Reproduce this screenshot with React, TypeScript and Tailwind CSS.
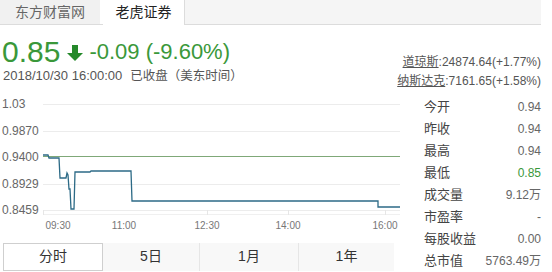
const stats = [
  { label: "今开", value: "0.94" },
  { label: "昨收", value: "0.94" },
  { label: "最高", value: "0.94" },
  { label: "最低", value: "0.85", down: true },
  { label: "成交量", value: "9.12万" },
  { label: "市盈率", value: "-" },
  { label: "每股收益", value: "0.00" },
  { label: "总市值", value: "5763.49万" },
];

const yLabels = ["1.03", "0.9870", "0.9400", "0.8929", "0.8459"];

function DownArrow() {
  return (
    <svg width="16" height="16" viewBox="0 0 16 16" className="shrink-0">
      <polygon points="5,0 11,0 11,8 16,8 8,16 0,8 5,8" fill="#25892a" />
    </svg>
  );
}

function Chart() {
  return (
    <svg width="357" height="128" viewBox="0 0 357 128" className="block">
      {[13, 40, 93, 119].map((y) => (
        <line key={y} x1="0" x2="357" y1={y + 0.5} y2={y + 0.5} stroke="#ececec" />
      ))}
      <line x1="0" x2="357" y1="123.5" y2="123.5" stroke="#f0f0f0" />
      {[0, 164, 245, 342].map((x) => (
        <line key={x} x1={x + 0.5} x2={x + 0.5} y1="119" y2="124" stroke="#e6e6e6" />
      ))}
      <line x1="0" x2="357" y1="65.5" y2="65.5" stroke="#7fa878" />
      <path
        d="M0,64 L5,64 L6,67 L16,67 L17,87 L23,87 L24,82 L25,84 L26,98 L27,98 L28,118 L31,118 L32,81 L47,81 L48,80 L88,80 L89,110 L335,110 L335,116 L357,116"
        fill="none"
        stroke="#2c6a86"
        strokeWidth="1.3"
      />
    </svg>
  );
}

export default function App() {
  return (
    <div className="w-[552px] h-[272px] overflow-hidden bg-white font-['Liberation_Sans','Noto_Sans_CJK_SC',sans-serif] text-[#555]">
      {/* tabs */}
      <div className="flex h-[25px] w-[541px]">
        <div className="flex w-[100px] items-center justify-center border-b border-[#dcdcdc] bg-[#f1f1f1] text-[14px] text-[#666]">
          东方财富网
        </div>
        <div className="w-[3px] border-b border-[#dcdcdc] bg-white" />
        <div className="flex w-[82px] items-center justify-center border-r border-[#dcdcdc] bg-white text-[14px] text-[#222]">
          老虎证券
        </div>
        <div className="flex-1 border-b border-[#dcdcdc] bg-[#f5f5f5]" />
      </div>

      {/* header */}
      <div className="flex h-[66px] justify-between">
        <div className="pl-[2px] pt-[12px]">
          <div className="flex h-[30px] items-center text-[#3a983a]">
            <span className="text-[30px] leading-[30px]">0.85</span>
            <span className="ml-[7px] mr-[6px] mt-[1px]">
              <DownArrow />
            </span>
            <span className="text-[22px] leading-[30px]">-0.09 (-9.60%)</span>
          </div>
          <div className="mt-[1px] flex items-center pl-[1px] text-[13px] leading-[16px] text-[#555]">
            <span>2018/10/30 16:00:00</span>
            <span className="ml-[8px] text-[12.5px]">已收盘（美东时间）</span>
          </div>
        </div>
        <div className="pr-[11px] pt-[28px] text-right text-[12px] leading-[19px] text-[#555]">
          <div>
            <span className="underline">道琼斯</span>:24874.64(+1.77%)
          </div>
          <div>
            <span className="underline">纳斯达克</span>:7161.65(+1.58%)
          </div>
        </div>
      </div>

      {/* body */}
      <div className="flex">
        <div className="w-[410px]">
          <div className="flex">
            <div className="w-[43px] pl-[2px] text-[12px] text-[#666]">
              {yLabels.map((l) => (
                <div key={l} className="h-[26.5px] leading-[27px]">
                  {l}
                </div>
              ))}
            </div>
            <Chart />
          </div>
          <div className="ml-[38px] -mt-[5px] flex h-[14px] text-[10px] leading-[14px] text-[#777]">
            <div className="w-[40px] text-center">09:30</div>
            <div className="ml-[26px] w-[40px] text-center">11:00</div>
            <div className="ml-[43px] w-[40px] text-center">12:30</div>
            <div className="ml-[41px] w-[40px] text-center">14:00</div>
            <div className="ml-[57px] w-[40px] text-center">16:00</div>
          </div>
          <div className="ml-[3px] mt-[10px] flex h-[28px] text-[14px] text-[#333]">
            <div className="flex w-[100px] items-center justify-center border border-[#cfcfcf] bg-white">
              分时
            </div>
            <div className="flex w-[97px] items-center justify-center border-r border-[#e6e6e6] bg-[#f8f8f8]">
              5日
            </div>
            <div className="flex w-[99px] items-center justify-center border-r border-[#e6e6e6] bg-[#f8f8f8]">
              1月
            </div>
            <div className="flex w-[95px] items-center justify-center bg-[#f8f8f8]">
              1年
            </div>
          </div>
        </div>

        <div className="ml-[14px] w-[117px] pt-[5px]">
          {stats.map((s) => (
            <div key={s.label} className="flex h-[22px] items-center justify-between">
              <span className="text-[13px] text-[#444]">{s.label}</span>
              <span className={s.down ? "text-[12px] text-[#3a983a]" : "text-[12px] text-[#666]"}>
                {s.value}
              </span>
            </div>
          ))}
        </div>
      </div>
    </div>
  );
}
